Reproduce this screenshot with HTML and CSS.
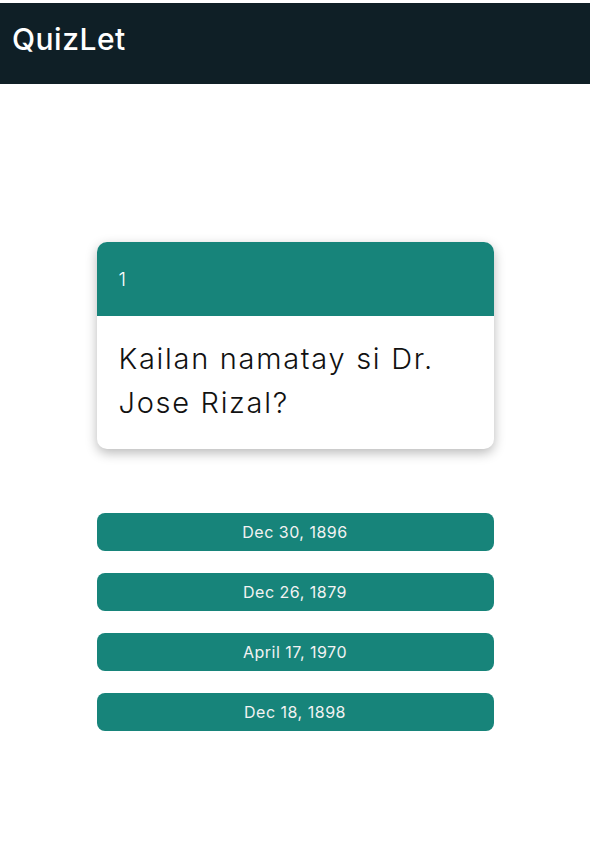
FILE: index.html
```html
<!DOCTYPE html>
<html lang="en">
<head>
<meta charset="utf-8">
<title>QuizLet</title>
<link rel="stylesheet" href="styles.css">
</head>
<body>
<div class="page">
  <header class="topbar">
    <h1 class="brand">QuizLet</h1>
  </header>
  <main class="quiz">
    <section class="card">
      <div class="card-head">1</div>
      <div class="card-body">Kailan namatay si Dr. Jose Rizal?</div>
    </section>
    <div class="choices">
      <button class="choice">Dec 30, 1896</button>
      <button class="choice">Dec 26, 1879</button>
      <button class="choice">April 17, 1970</button>
      <button class="choice">Dec 18, 1898</button>
    </div>
  </main>
</div>
</body>
</html>
```
FILE: styles.css
```css
html, body {
  margin: 0;
  padding: 0;
  background: #ffffff;
}
body {
  font-family: "Inter", "Open Sans", sans-serif;
}
.page {
  padding-top: 3px;
  width: 590px;
}
.topbar {
  background: #0f1f26;
  height: 81px;
  display: flex;
  align-items: center;
  padding-left: 12px;
}
.brand {
  margin: 0 0 9px 0;
  color: #ffffff;
  font-size: 30px;
  font-weight: 500;
  letter-spacing: 0.5px;
}
.quiz {
  display: flex;
  flex-direction: column;
  align-items: center;
  padding-top: 158px;
}
.card {
  width: 397px;
  border-radius: 10px;
  overflow: hidden;
  background: #ffffff;
  box-shadow: 0 4px 12px rgba(0, 0, 0, 0.28);
}
.card-head {
  background: #17847a;
  color: #ffffff;
  height: 74px;
  box-sizing: border-box;
  padding: 26px 22px 0;
  font-size: 19px;
  font-weight: 300;
}
.card-body {
  padding: 21px 22px 24px;
  font-size: 29px;
  font-weight: 300;
  line-height: 44px;
  color: #111111;
  letter-spacing: 1.7px;
}
.choices {
  display: flex;
  flex-direction: column;
  gap: 22px;
  margin-top: 64px;
}
.choice {
  width: 397px;
  height: 38px;
  border: none;
  border-radius: 8px;
  background: #17847a;
  color: #f2f2f2;
  font-family: "Inter", sans-serif;
  font-size: 16px;
  font-weight: 400;
  letter-spacing: 0.5px;
}
```
